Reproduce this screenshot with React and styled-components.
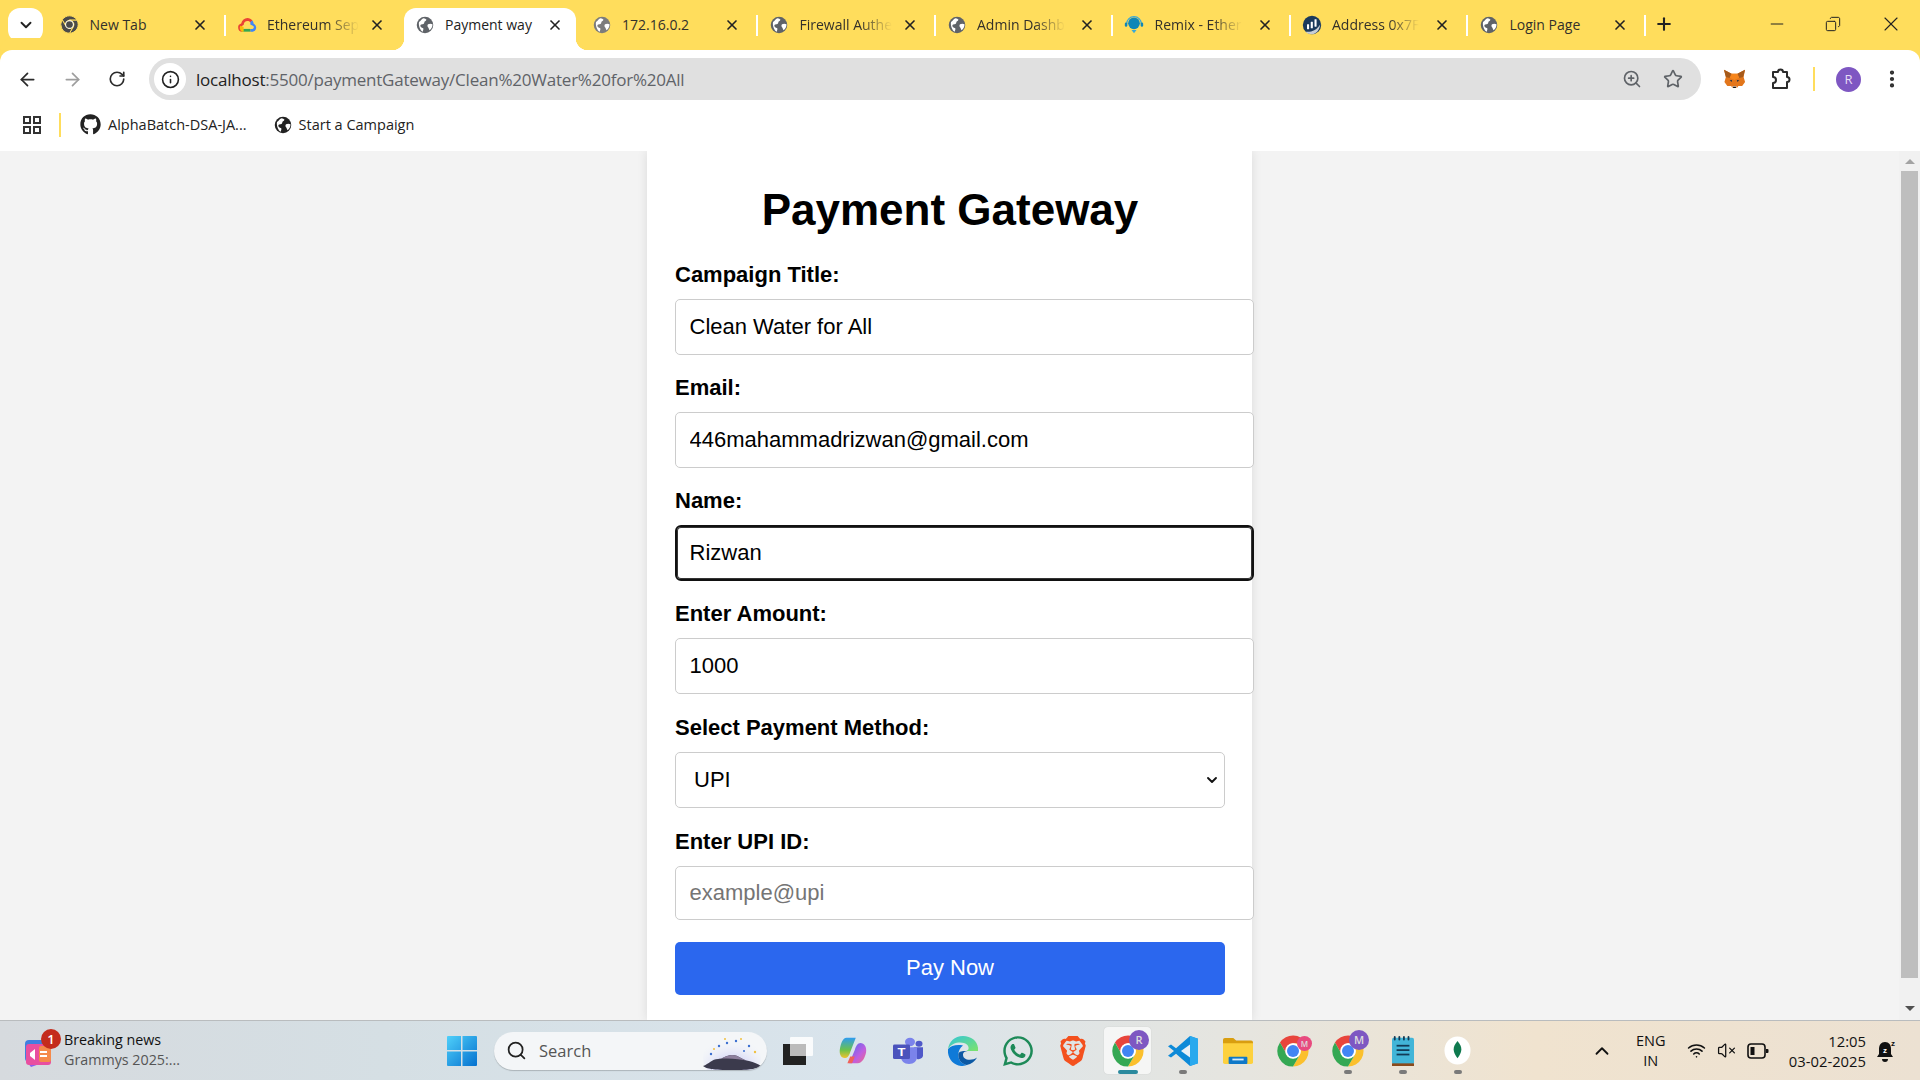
import React from 'react';
import styled, { createGlobalStyle } from 'styled-components';
import {
  ChevronDown, X, ArrowLeft, ArrowRight, RotateCw, Info, ZoomIn, Star, MoreVertical,
  Plus, Minus, Search, ChevronUp, Wifi, VolumeX, Copy,
} from 'lucide-react';
import { FaGithub, FaWhatsapp } from 'react-icons/fa';
import { SiBrave } from 'react-icons/si';

const UI_FONT = '"Open Sans", "Noto Sans", sans-serif';

const GlobalStyle = createGlobalStyle`
  html, body { margin: 0; padding: 0; height: 100%; overflow: hidden; }
  body { font-family: "Liberation Sans", Arial, sans-serif; background: #f3f3f3; }
  #root { height: 100%; }
`;

/* ---------- drawn icons ---------- */

const Globe = ({ size = 18, color = '#5f6368' }) => (
  <svg width={size} height={size} viewBox="0 0 24 24">
    <circle cx="12" cy="12" r="11" fill={color} />
    <path d="M4 8c2-1 3-4 6-5 2 0 3 1 4 2-1 2-3 2-3 4s-2 2-3 2-3 1-2 3c1 2 3 1 4 3l-1 4C6 20 3 13 4 8z" fill="#fff" />
    <path d="M16 11c2-1 4-1 6 0 0 3-1 6-4 8-1-2-1-3-2-4s-1-3 0-4z" fill="#fff" />
  </svg>
);

const ChromeLogo = ({ size = 34, mono }) => {
  const seam = mono ? { stroke: '#ffdd5c', strokeWidth: 2.5 } : {};
  return (
    <svg width={size} height={size} viewBox="0 0 48 48">
      <path d="M24 13h19.05A22 22 0 0 0 5.6 12L15 28.5A11 11 0 0 1 24 13z" fill={mono || '#e8453c'} {...seam} />
      <path d="M43.05 13H24a11 11 0 0 1 9.5 16.5L24 46A22 22 0 0 0 43.05 13z" fill={mono || '#fbc02d'} {...seam} />
      <path d="M5.6 12A22 22 0 0 0 24 46l9.5-16.5A11 11 0 0 1 15 28.5z" fill={mono || '#34a853'} {...seam} />
      <circle cx="24" cy="24" r="11" fill="#fff" />
      <circle cx="24" cy="24" r="8.5" fill={mono || '#4285f4'} />
    </svg>
  );
};

const CloudLogo = () => (
  <svg width="20" height="20" viewBox="0 0 24 24">
    <path d="M6 20a5 5 0 0 1-1-9.8C6 6 9 3.5 12.5 3.5c2.5 0 4.500 1 6 3l-2.500 2.500c-1-1.200-2-1.700-3.500-1.700-2.500 0-4.300 1.800-4.500 4.700L8 12a3 3 0 0 0-2 4.700z" fill="#ea4335" />
    <path d="M18.500 6.500A8 8 0 0 1 20 10.500a5 5 0 0 1-1 9.500h-3v-3.300h2.500a2 2 0 0 0 .5-3.800l-3-1.500.000-2.900z" fill="#4285f4" />
    <path d="M6 16.700h10V20H6z" fill="#34a853" />
    <path d="M4 13l4 1.500A3 3 0 0 0 8 16.700V20H6a5 5 0 0 1-2-7z" fill="#fbbc05" />
  </svg>
);

const RemixLogo = () => (
  <svg width="22" height="22" viewBox="0 0 24 24">
    <circle cx="12" cy="10" r="7" fill="#0f86b8" />
    <path d="M3 11a9 9 0 0 1 18 0" fill="none" stroke="#3ba9d6" strokeWidth="1.500" />
    <rect x="1" y="9" width="3" height="5" rx="1.500" fill="#0f86b8" />
    <rect x="20" y="9" width="3" height="5" rx="1.500" fill="#0f86b8" />
    <path d="M9 18h6l-3 4z" fill="#3ba9d6" />
  </svg>
);

const EtherscanLogo = () => (
  <svg width="20" height="22" viewBox="0 0 24 24">
    <circle cx="12" cy="12" r="11" fill="#1b3a5c" />
    <path d="M4 20c7 1 14-2 18-9-1 7-5 12-10 12-3 0-6-1-8-3z" fill="#c9ced4" />
    <rect x="6" y="11" width="2.500" height="6" rx=".5" fill="#fff" />
    <rect x="10.500" y="8" width="2.500" height="8" rx=".5" fill="#fff" />
    <rect x="15" y="5" width="2.500" height="9" rx=".5" fill="#fff" />
  </svg>
);

const FoxLogo = () => (
  <svg width="23" height="21" viewBox="0 0 24 26" preserveAspectRatio="none">
    <path d="M1 1l8 5h6l8-5-1.500 9 1.500 6-3 5-4 0-1 2H9.500l-1-2-4 0-3-5 1.500-6z" fill="#e2761b" />
    <path d="M1 1l8 5-2 5-4-1z" fill="#a65a1a" />
    <path d="M23 1l-8 5 2 5 4-1z" fill="#a65a1a" />
    <path d="M9 6h6l2 5-5 3-5-3z" fill="#f6851b" />
    <path d="M7 11l5 3 5-3 1 6-3 4H9l-3-4z" fill="#e4761b" />
    <path d="M7 14l2.500-.5L9 16zM17 14l-2.500-.5L15 16z" fill="#233447" />
    <path d="M9.500 21h5l-1 2h-3z" fill="#d7c1b3" />
    <path d="M10.500 22h3v1.500h-3z" fill="#161616" />
  </svg>
);

const ExtensionIcon = () => (
  <svg width="24" height="24" viewBox="0 0 24 24" fill="none" stroke="#2b2b2b" strokeWidth="2" strokeLinejoin="round">
    <path d="M4 5h5a2.500 2.500 0 0 1 5 0h4v5a2.500 2.500 0 0 1 0 5v6H4v-5a3 3 0 0 0 0-6z" />
  </svg>
);

const GridIcon = () => (
  <svg width="20" height="20" viewBox="0 0 20 20" fill="none" stroke="#333" strokeWidth="2">
    <rect x="2" y="2" width="6" height="6" />
    <rect x="12" y="2" width="6" height="6" />
    <rect x="2" y="12" width="6" height="6" />
    <rect x="12" y="12" width="6" height="6" />
  </svg>
);

const NewsIcon = () => (
  <svg width="30" height="34" viewBox="0 0 30 34">
    <rect x="2" y="6" width="22" height="22" rx="4" fill="#3f7fe0" />
    <path d="M4 28l18 0-14 5z" fill="#8a5cf0" />
    <rect x="3" y="10" width="25" height="21" rx="3" fill="#e84fa0" />
    <rect x="16" y="12" width="12" height="16" rx="2" fill="#f58a4b" />
    <path d="M7 19l5-4v11l-5-4z" fill="#fff" />
    <path d="M17 18h7M17 22h7" stroke="#fff" strokeWidth="2" />
  </svg>
);

const WindowsLogo = () => (
  <svg width="30" height="30" viewBox="0 0 30 30">
    <defs>
      <linearGradient id="winG" x1="0" y1="0" x2="1" y2="1">
        <stop offset="0" stopColor="#4fd0fa" />
        <stop offset="1" stopColor="#0571cf" />
      </linearGradient>
    </defs>
    <path d="M0 1a1 1 0 0 1 1-1h13v14H0zM15.500 0H29a1 1 0 0 1 1 1v13H15.500zM0 15.500h14V30H1a1 1 0 0 1-1-1zM15.500 15.500H30V29a1 1 0 0 1-1 1H15.500z" fill="url(#winG)" />
  </svg>
);

const SearchArt = () => (
  <svg width="58" height="32" viewBox="0 6 58 32" preserveAspectRatio="none">
    <defs>
      <radialGradient id="glow" cx=".5" cy=".8" r=".7">
        <stop offset="0" stopColor="#a8a4f4" />
        <stop offset="1" stopColor="#eef3fa" stopOpacity="0" />
      </radialGradient>
    </defs>
    <ellipse cx="29" cy="26" rx="29" ry="24" fill="url(#glow)" />
    <path d="M0 34c6-2 9-7 15-7 5 0 8-4 14-4 7 0 10 5 17 6 5 1 9 3 12 5-4 3-10 4-29 4S4 37 0 34z" fill="#3b3a4c" />
    <path d="M15 27c5 0 8-4 14-4 7 0 10 5 17 6-10-2-20-3-31-2z" fill="#8d7f9d" />
    <g fill="#3b6fd0">
      <circle cx="8" cy="22" r="1.200" /><circle cx="16" cy="14" r="1.200" /><circle cx="24" cy="11" r="1.200" />
      <circle cx="33" cy="9" r="1.200" /><circle cx="46" cy="14" r="1.200" /><circle cx="41" cy="19" r="1" />
    </g>
    <g fill="#f0c040">
      <circle cx="11" cy="17" r="1" /><circle cx="22" cy="7" r="1" /><circle cx="38" cy="7" r="1" /><circle cx="52" cy="20" r="1.200" />
    </g>
  </svg>
);

const TaskViewIcon = () => (
  <svg width="30" height="28" viewBox="0 0 30 28">
    <rect x="0" y="7" width="23" height="21" fill="#222" />
    <rect x="7" y="0" width="23" height="19" rx="1" fill="#fff" fillOpacity=".85" />
    <rect x="7" y="7" width="16" height="12" fill="#bbb" />
  </svg>
);

const CopilotIcon = () => (
  <svg width="28" height="27" viewBox="0 0 30 32" preserveAspectRatio="none">
    <defs>
      <linearGradient id="copA" x1="0" y1="0" x2="0" y2="1">
        <stop offset="0" stopColor="#2f9cf0" />
        <stop offset=".6" stopColor="#6cc24a" />
        <stop offset="1" stopColor="#f2c230" />
      </linearGradient>
      <linearGradient id="copB" x1="0" y1="0" x2="1" y2="1">
        <stop offset="0" stopColor="#4a6cf0" />
        <stop offset=".6" stopColor="#c05ee0" />
        <stop offset="1" stopColor="#f06a80" />
      </linearGradient>
    </defs>
    <path d="M8 1h10l-6 17c-1 4-3 7-6 7-4 0-6-5-5-11C2 8 4 1 8 1z" fill="url(#copA)" />
    <path d="M20 31H11l6-16c1-4 3-8 6-8 4 0 7 5 6 11-1 6-4 13-9 13z" fill="url(#copB)" />
    <path d="M9 31l3-8h5l-3 8z" fill="#f0625a" />
  </svg>
);

const TeamsIcon = () => (
  <svg width="30" height="27" viewBox="0 0 30 32" preserveAspectRatio="none">
    <circle cx="17" cy="6" r="5" fill="#7b83eb" />
    <circle cx="26" cy="8" r="3.500" fill="#5059c9" />
    <path d="M21 12h9v10c0 3-3 5-6 4z" fill="#5059c9" />
    <path d="M8 12h16v12c0 4-3 8-8 8s-8-4-8-8z" fill="#7b83eb" />
    <rect x="0" y="9" width="17" height="17" rx="1.500" fill="#4b53bc" />
    <text x="8.500" y="22" fontFamily="Liberation Sans, sans-serif" fontSize="13" fontWeight="700" fill="#fff" textAnchor="middle">T</text>
  </svg>
);

const EdgeIcon = () => (
  <svg width="30" height="30" viewBox="0 0 32 32">
    <defs>
      <linearGradient id="edgeA" x1="0" y1="0" x2="1" y2="1">
        <stop offset="0" stopColor="#33c6d8" />
        <stop offset="1" stopColor="#7de36a" />
      </linearGradient>
    </defs>
    <path d="M16 0C7 0 1 6 0 14c3-5 8-7 13-7 6 0 9 3 9 6 0 2-2 3-4 3h14c1-9-6-16-16-16z" fill="url(#edgeA)" />
    <path d="M0 14c-1 9 5 17 14 18 2 0 4 0 6-1-5-1-9-5-9-11 0-4 2-8 5-10-7-1-13 0-16 4z" fill="#0f7ad8" />
    <path d="M11 20c0 6 4 10 9 11 5-1 9-4 11-8-3 2-7 3-11 2-3-1-4-3-4-5 0-3 3-4 6-4h-4c-4 0-7 1-7 4z" fill="#0c59a4" />
  </svg>
);

const VsCodeIcon = () => (
  <svg width="30" height="30" viewBox="0 0 30 32" preserveAspectRatio="none">
    <path d="M22 0l8 3v26l-8 3L8 19l-5 4-3-2 6-5-6-5 3-2 5 4z" fill="#0d8ad8" />
    <path d="M22 0l8 3v26l-8 3z" fill="#29a9ee" />
    <path d="M22 9L13 16l9 7z" fill="#e9f1f7" />
  </svg>
);

const FolderIcon = () => (
  <svg width="30" height="27" viewBox="0 0 32 30" preserveAspectRatio="none">
    <path d="M0 3a2 2 0 0 1 2-2h9l3 3h16a2 2 0 0 1 2 2v3H0z" fill="#d99e10" />
    <path d="M0 7h32v21a2 2 0 0 1-2 2H2a2 2 0 0 1-2-2z" fill="#fdd13e" />
    <rect x="6" y="22" width="20" height="8" rx="1" fill="#0f78c8" />
    <rect x="10" y="24" width="12" height="2" fill="#d8ecfa" />
  </svg>
);

const NotepadIcon = () => (
  <svg width="22" height="30" viewBox="0 0 24 34" preserveAspectRatio="none">
    <rect x="0" y="2" width="24" height="30" rx="2" fill="#42b5d8" />
    <rect x="0" y="31" width="24" height="3" fill="#8a4a1c" />
    <g fill="#123a56">
      <rect x="2" y="0" width="2" height="5" rx="1" /><rect x="7" y="0" width="2" height="5" rx="1" />
      <rect x="12" y="0" width="2" height="5" rx="1" /><rect x="17" y="0" width="2" height="5" rx="1" />
      <rect x="5" y="10" width="14" height="2" /><rect x="5" y="15" width="14" height="2" /><rect x="5" y="20" width="14" height="2" />
    </g>
  </svg>
);

const MongoIcon = () => (
  <svg width="27" height="29" viewBox="0 0 28 34" preserveAspectRatio="none">
    <ellipse cx="14" cy="17" rx="13.500" ry="16.500" fill="#fff" />
    <path d="M14 6c3 4 4 7 4 10s-2 7-4 10c-2-3-4-7-4-10s1-6 4-10z" fill="#0f7a4f" />
  </svg>
);

const BatteryIcon = () => (
  <svg width="22" height="18" viewBox="0 0 22 18">
    <rect x="1" y="2" width="17" height="14" rx="3" fill="none" stroke="#111" strokeWidth="1.600" />
    <rect x="3.500" y="5" width="4" height="8" fill="#111" />
    <path d="M19 7h1.500a1 1 0 0 1 1 1v2a1 1 0 0 1-1 1H19z" fill="#111" />
  </svg>
);

const SnoozeBell = () => (
  <svg width="20" height="24" viewBox="0 0 20 24">
    <path d="M9 3c-4 0-6 3-6 7v5l-2 3h16l-2-3v-5c0-4-2-7-6-7z" fill="#111" />
    <path d="M6 20h6a3 3 0 0 1-6 0z" fill="#111" />
    <text x="9" y="14" fontFamily="Liberation Sans, sans-serif" fontSize="8" fontWeight="700" fill="#fff" textAnchor="middle">z</text>
    <text x="15" y="7" fontFamily="Liberation Sans, sans-serif" fontSize="8" fontWeight="700" fill="#111">z</text>
  </svg>
);

/* ---------- window chrome ---------- */

const Screen = styled.div`
  height: 1080px;
  display: flex;
  flex-direction: column;
  overflow: hidden;
`;

const TabStrip = styled.div`
  height: 50px;
  flex: none;
  background: #ffdd5c;
  display: flex;
  align-items: flex-end;
  padding-left: 8px;
`;

const TabMenu = styled.button`
  width: 35px;
  height: 34px;
  margin-bottom: 8px;
  margin-right: 5px;
  border: 0;
  padding: 0;
  background: #fff;
  border-radius: 12px;
  display: flex;
  align-items: center;
  justify-content: center;
  color: #222;
`;

const Tab = styled.div`
  width: 177.500px;
  height: 42px;
  flex: none;
  box-sizing: border-box;
  display: flex;
  align-items: center;
  position: relative;
  padding: 0 18px 9px 11px;
  font: 14px ${UI_FONT};
  color: #33302a;
  ${p => p.$active && `
    background: #fff;
    border-radius: 12px 12px 0 0;
    color: #222;
    width: 172px;
    margin: 0 4.500px 0 1px;
    padding: 0 13px 9px 10.500px;
    &::before, &::after {
      content: "";
      position: absolute;
      bottom: 0;
      width: 12px;
      height: 12px;
    }
    &::before { left: -12px; background: radial-gradient(circle at 0 0, #ffdd5c 12px, #fff 12.500px); }
    &::after { right: -12px; background: radial-gradient(circle at 100% 0, #ffdd5c 12px, #fff 12.500px); }
  `}
  ${p => p.$sep && `
    &::after {
      content: "";
      position: absolute;
      right: 0;
      top: 7px;
      width: 2px;
      height: 21px;
      background: #fff;
    }
  `}
`;

const TabIcon = styled.span`
  width: 20px;
  flex: none;
  display: flex;
  align-items: center;
  justify-content: center;
`;

const TabTitle = styled.span`
  margin-left: 10.500px;
  margin-right: auto;
  white-space: nowrap;
  ${p => p.$fade && `
    -webkit-mask-image: linear-gradient(to right, #000 65%, transparent 100%);
    mask-image: linear-gradient(to right, #000 65%, transparent 100%);
  `}
`;

const NewTab = styled.span`
  margin-left: 8px;
  margin-bottom: 16px;
  display: flex;
  color: #222;
`;

const WindowControls = styled.div`
  margin-left: auto;
  display: flex;
  align-items: center;
  height: 50px;
  padding-bottom: 2px;
  box-sizing: border-box;
  gap: 38px;
  padding-right: 17px;
  color: #222;
`;

const RestoreIcon = styled.span`
  display: flex;
  transform: scaleX(-1);
`;

const Toolbar = styled.div`
  height: 50px;
  flex: none;
  background: #fff;
  border-radius: 12px 12px 0 0;
  box-shadow: 0 -12px 0 #ffdd5c;
  display: flex;
  align-items: center;
  box-sizing: border-box;
  padding: 8px 0 0 15px;
`;

const NavButton = styled.span`
  width: 24px;
  display: flex;
  justify-content: center;
  margin-right: 21px;
  color: ${p => (p.$off ? '#9e9e9e' : '#2b2b2b')};
`;

const Omnibox = styled.div`
  width: 1552px;
  height: 42px;
  margin-left: -1px;
  flex: none;
  background: #e0e0e0;
  border-radius: 21px;
  display: flex;
  align-items: center;
  padding: 0 18px 0 5px;
  box-sizing: border-box;
  gap: 10px;
`;

const SiteInfo = styled.span`
  width: 32px;
  height: 32px;
  flex: none;
  border-radius: 50%;
  background: #fff;
  display: flex;
  align-items: center;
  justify-content: center;
  color: #222;
`;

const Url = styled.span`
  flex: 1;
  font: 17px ${UI_FONT};
  color: #5f6368;
  letter-spacing: -0.220px;
  b { font-weight: 400; color: #222; }
`;

const OmniAction = styled.span`
  display: flex;
  color: #5f6368;
  margin-left: 11px;
`;

const ToolbarEnd = styled.div`
  display: flex;
  align-items: center;
  margin-left: 22px;
`;

const ExtensionSlot = styled.span`
  display: flex;
  margin-left: 23px;
`;

const ToolbarSep = styled.span`
  width: 2px;
  height: 24px;
  background: #ffdd5c;
  margin: 0 21px 0 20px;
`;

const Avatar = styled.span`
  width: 25px;
  height: 25px;
  border-radius: 50%;
  background: #7e57c2;
  color: #e6dcf5;
  font: 13px ${UI_FONT};
  display: flex;
  align-items: center;
  justify-content: center;
`;

const Kebab = styled.span`
  display: flex;
  margin-left: 20px;
  color: #2b2b2b;
`;

const BookmarkBar = styled.div`
  height: 51px;
  flex: none;
  box-sizing: border-box;
  padding: 0 0 2px 22px;
  background: #fff;
  display: flex;
  align-items: center;
  font: 14.500px ${UI_FONT};
  color: #222;
`;

const BarSep = styled.span`
  width: 2px;
  height: 24px;
  background: #ffdd5c;
  margin: 0 19px 0 17px;
`;

const Bookmark = styled.span`
  display: flex;
  align-items: center;
  gap: 7px;
  margin-right: 27px;
`;

/* ---------- page ---------- */

const Viewport = styled.div`
  flex: 1;
  min-height: 0;
  display: flex;
`;

const PageArea = styled.main`
  flex: 1;
  min-width: 0;
  display: flex;
  justify-content: center;
  background: #f3f3f3;
  overflow: hidden;
`;

const Card = styled.div`
  width: 605px;
  flex: none;
  box-sizing: border-box;
  padding: 34px 27px 0 28px;
  background: #fff;
  box-shadow: 0 0 10px rgba(0, 0, 0, 0.1);
`;

const Title = styled.h2`
  margin: 0 0 26.600px;
  font-size: 44px;
  line-height: 50px;
  font-weight: 700;
  text-align: center;
  color: #000;
`;

const Group = styled.div`
  margin-bottom: ${p => (p.$wide ? '20.600px' : '19.600px')};
`;

const Label = styled.label`
  display: block;
  font-size: 22px;
  line-height: 25px;
  font-weight: 700;
  margin-bottom: 12.400px;
  color: #000;
`;

const Input = styled.input`
  display: block;
  width: 100%;
  box-sizing: content-box;
  height: ${p => (p.$short ? '52px' : '54px')};
  margin: 0;
  padding: 0 13.500px;
  border: 1px solid #ccc;
  border-radius: 5px;
  font: 22px "Liberation Sans", Arial, sans-serif;
  color: #000;
  background: #fff;
  outline: none;
  &::placeholder { color: #757575; opacity: 1; }
  ${p => p.$focused && `
    height: 52px;
    padding: 0 12.500px;
    border: 2px solid #111;
    border-radius: 6px;
    box-shadow: 0 0 0 1px #333 inset;
  `}
`;

const SelectWrap = styled.div`
  position: relative;
`;

const Select = styled.select`
  display: block;
  width: 100%;
  height: 56px;
  box-sizing: border-box;
  appearance: none;
  padding: 0 18px;
  border: 1px solid #ccc;
  border-radius: 5px;
  font: 22px "Liberation Sans", Arial, sans-serif;
  color: #000;
  background: #fff;
`;

const SelectArrow = styled.span`
  position: absolute;
  right: 5px;
  top: 20px;
  display: flex;
  pointer-events: none;
  color: #111;
`;

const PayButton = styled.button`
  display: block;
  width: 100%;
  height: 53px;
  margin-top: 22px;
  padding: 0;
  border: 0;
  border-radius: 5px;
  background: #2b67ee;
  color: #fff;
  font: 22px "Liberation Sans", Arial, sans-serif;
`;

const Scrollbar = styled.div`
  width: 21px;
  flex: none;
  box-sizing: border-box;
  padding: 0 2px 2px;
  background: #f1f1f1;
  display: flex;
  flex-direction: column;
`;

const ScrollArrow = styled.span`
  height: 20px;
  flex: none;
  display: flex;
  align-items: center;
  justify-content: center;
  ${p => p.$down && 'margin-top: auto;'}
  &::before {
    content: "";
    border-left: 5px solid transparent;
    border-right: 5px solid transparent;
    ${p => (p.$down ? 'border-top: 5px solid #505050;' : 'border-bottom: 5px solid #a3a3a3;')}
  }
`;

const ScrollThumb = styled.span`
  height: 807px;
  flex: none;
  background: #bebebe;
`;

/* ---------- taskbar ---------- */

const Taskbar = styled.footer`
  height: 60px;
  flex: none;
  box-sizing: border-box;
  border-top: 1px solid #b9bcbe;
  background: linear-gradient(90deg, #d6dade 0%, #d5dfe4 20%, #d9e4ec 45%, #e6e5df 65%, #f0e3cf 80%, #ece1d2 100%);
  display: flex;
  align-items: center;
  font-family: ${UI_FONT};
  color: #111;
`;

const NewsWidget = styled.div`
  width: 447px;
  flex: none;
  box-sizing: border-box;
  padding-left: 23px;
  display: flex;
  align-items: center;
  gap: 11px;
`;

const NewsArt = styled.span`
  position: relative;
  display: flex;
`;

const RedBadge = styled.span`
  position: absolute;
  top: -5px;
  right: -8px;
  width: 20px;
  height: 20px;
  border-radius: 50%;
  background: #c42b1c;
  color: #fff;
  font: 600 13px/20px ${UI_FONT};
  text-align: center;
`;

const NewsText = styled.div`
  font-size: 14.300px;
  line-height: 20px;
  margin-top: -2px;
  span { display: block; color: #555; }
`;

const SearchBox = styled.div`
  width: 273px;
  height: 38px;
  margin-left: 17px;
  flex: none;
  box-sizing: border-box;
  background: #f4f6f8;
  border-radius: 19px;
  box-shadow: 0 1px 1px rgba(0, 0, 0, 0.2);
  display: flex;
  align-items: center;
  padding: 0 6px 0 12px;
  gap: 12px;
  font-size: 16.500px;
  color: #555;
  overflow: hidden;
  span { flex: 1; }
`;

const SearchArtSlot = styled.span`
  flex: none !important;
  display: flex;
  align-self: flex-end;
`;

const Dock = styled.div`
  display: flex;
  align-items: center;
  margin-left: 3px;
`;

const DockItem = styled.div`
  width: 47px;
  height: 47px;
  margin: 0 4px;
  flex: none;
  position: relative;
  display: flex;
  align-items: center;
  justify-content: center;
  border-radius: 4px;
  ${p => p.$active && 'background: rgba(255,255,255,0.65); box-shadow: 0 0 1px rgba(0,0,0,0.2);'}
  ${p => p.$running && `
    &::after {
      content: "";
      position: absolute;
      bottom: 0;
      left: 50%;
      transform: translateX(-50%);
      height: 4px;
      border-radius: 2px;
      width: ${p.$active ? '20px' : '8px'};
      background: ${p.$active ? '#2b8a9e' : '#7a7a7a'};
    }
  `}
`;

const ProfileDot = styled.span`
  position: absolute;
  top: ${p => (p.$small ? '9px' : '3px')};
  right: ${p => (p.$small ? '4px' : '2px')};
  width: ${p => (p.$small ? '15px' : '20px')};
  height: ${p => (p.$small ? '15px' : '20px')};
  border-radius: 50%;
  background: ${p => p.$color};
  color: #ddd;
  font: 600 ${p => (p.$small ? '8px' : '11px')}/${p => (p.$small ? '15px' : '20px')} ${UI_FONT};
  text-align: center;
`;

const Tray = styled.div`
  margin-left: auto;
  display: flex;
  align-items: center;
  padding-right: 24px;
`;

const Lang = styled.div`
  width: 40px;
  margin: 0 16px 0 18px;
  text-align: center;
  font-size: 14.500px;
  line-height: 20px;
`;

const TrayIcons = styled.div`
  display: flex;
  align-items: center;
  gap: 11px;
  margin-right: 20px;
`;

const Clock = styled.div`
  text-align: right;
  font-size: 14.800px;
  line-height: 20px;
  margin-right: 10px;
`;

const tabs = [
  { title: 'New Tab', icon: <ChromeLogo size={19} mono="#4a4a4a" /> },
  { title: 'Ethereum Sep', icon: <CloudLogo />, fade: true },
  { title: 'Payment way', icon: <Globe />, active: true },
  { title: '172.16.0.2', icon: <Globe color="#7c7c7c" /> },
  { title: 'Firewall Authe', icon: <Globe />, fade: true },
  { title: 'Admin Dashb', icon: <Globe />, fade: true },
  { title: 'Remix - Ether', icon: <RemixLogo />, fade: true },
  { title: 'Address 0x7F', icon: <EtherscanLogo />, fade: true },
  { title: 'Login Page', icon: <Globe /> },
];

const fields = [
  { label: 'Campaign Title:', value: 'Clean Water for All' },
  { label: 'Email:', value: '446mahammadrizwan@gmail.com' },
  { label: 'Name:', value: 'Rizwan', focused: true },
  { label: 'Enter Amount:', value: '1000', wide: true },
];

export default function App() {
  return (
    <Screen>
      <GlobalStyle />
      <TabStrip>
        <TabMenu><ChevronDown size={18} strokeWidth={2.500} /></TabMenu>
        {tabs.map((t, i) => (
          <Tab key={t.title} $active={t.active} $sep={!t.active && i !== 1}>
            <TabIcon>{t.icon}</TabIcon>
            <TabTitle $fade={t.fade}>{t.title}</TabTitle>
            <X size={16} strokeWidth={2.500} color="#222" />
          </Tab>
        ))}
        <NewTab><Plus size={20} strokeWidth={2.500} /></NewTab>
        <WindowControls>
          <Minus size={20} strokeWidth={1.200} />
          <RestoreIcon><Copy size={16} strokeWidth={1.500} /></RestoreIcon>
          <X size={24} strokeWidth={1.100} />
        </WindowControls>
      </TabStrip>

      <Toolbar>
        <NavButton><ArrowLeft size={21} strokeWidth={2} /></NavButton>
        <NavButton $off><ArrowRight size={21} strokeWidth={2} /></NavButton>
        <NavButton><RotateCw size={18} strokeWidth={2.200} /></NavButton>
        <Omnibox>
          <SiteInfo><Info size={19} strokeWidth={2} /></SiteInfo>
          <Url><b>localhost</b>:5500/paymentGateway/Clean%20Water%20for%20All</Url>
          <OmniAction><ZoomIn size={20} /></OmniAction>
          <OmniAction><Star size={20} strokeWidth={2} /></OmniAction>
        </Omnibox>
        <ToolbarEnd>
          <FoxLogo />
          <ExtensionSlot><ExtensionIcon /></ExtensionSlot>
          <ToolbarSep />
          <Avatar>R</Avatar>
          <Kebab><MoreVertical size={22} strokeWidth={2.600} /></Kebab>
        </ToolbarEnd>
      </Toolbar>

      <BookmarkBar>
        <GridIcon />
        <BarSep />
        <Bookmark><FaGithub size={21} color="#222" />AlphaBatch-DSA-JA...</Bookmark>
        <Bookmark><Globe size={18} color="#222" />Start a Campaign</Bookmark>
      </BookmarkBar>

      <Viewport>
        <PageArea>
          <Card>
            <Title>Payment Gateway</Title>
            {fields.map(f => (
              <Group key={f.label} $wide={f.wide}>
                <Label>{f.label}</Label>
                <Input readOnly value={f.value} $focused={f.focused} />
              </Group>
            ))}
            <Group $wide>
              <Label>Select Payment Method:</Label>
              <SelectWrap>
                <Select defaultValue="UPI"><option>UPI</option></Select>
                <SelectArrow><ChevronDown size={16} strokeWidth={2.800} /></SelectArrow>
              </SelectWrap>
            </Group>
            <Group>
              <Label>Enter UPI ID:</Label>
              <Input readOnly placeholder="example@upi" $short />
            </Group>
            <PayButton>Pay Now</PayButton>
          </Card>
        </PageArea>
        <Scrollbar>
          <ScrollArrow />
          <ScrollThumb />
          <ScrollArrow $down />
        </Scrollbar>
      </Viewport>

      <Taskbar>
        <NewsWidget>
          <NewsArt><NewsIcon /><RedBadge>1</RedBadge></NewsArt>
          <NewsText>Breaking news<span>Grammys 2025:...</span></NewsText>
        </NewsWidget>
        <WindowsLogo />
        <SearchBox>
          <Search size={21} strokeWidth={2} color="#222" />
          <span>Search</span>
          <SearchArtSlot><SearchArt /></SearchArtSlot>
        </SearchBox>
        <Dock>
          <DockItem><TaskViewIcon /></DockItem>
          <DockItem><CopilotIcon /></DockItem>
          <DockItem><TeamsIcon /></DockItem>
          <DockItem><EdgeIcon /></DockItem>
          <DockItem><FaWhatsapp size={34} color="#1d8a58" /></DockItem>
          <DockItem><SiBrave size={30} color="#f4511e" /></DockItem>
          <DockItem $active $running><ChromeLogo /><ProfileDot $color="#7e57c2">R</ProfileDot></DockItem>
          <DockItem $running><VsCodeIcon /></DockItem>
          <DockItem><FolderIcon /></DockItem>
          <DockItem><ChromeLogo /><ProfileDot $small $color="#e84a7f">M</ProfileDot></DockItem>
          <DockItem $running><ChromeLogo /><ProfileDot $color="#7e57c2">M</ProfileDot></DockItem>
          <DockItem $running><NotepadIcon /></DockItem>
          <DockItem $running><MongoIcon /></DockItem>
        </Dock>
        <Tray>
          <ChevronUp size={22} strokeWidth={2} />
          <Lang>ENG<br />IN</Lang>
          <TrayIcons>
            <Wifi size={19} strokeWidth={2} />
            <VolumeX size={19} strokeWidth={1.600} />
            <BatteryIcon />
          </TrayIcons>
          <Clock>12:05<br />03-02-2025</Clock>
          <SnoozeBell />
        </Tray>
      </Taskbar>
    </Screen>
  );
}
